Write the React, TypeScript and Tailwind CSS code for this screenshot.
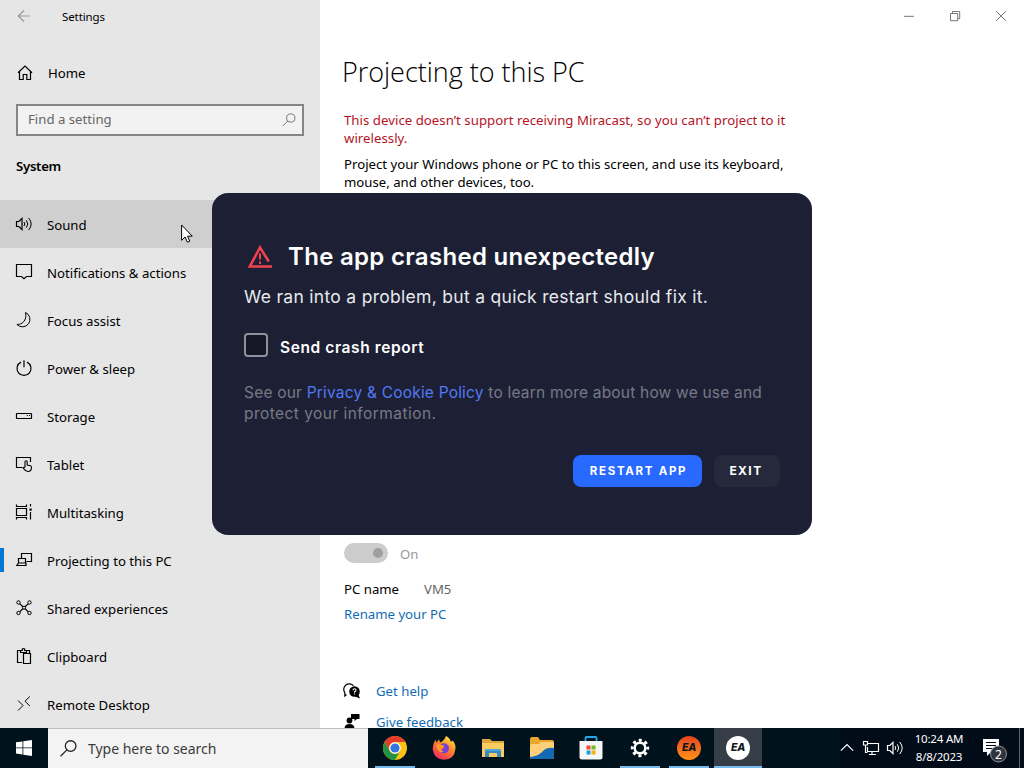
import React from 'react';

type NavEntry = { label: string; icon: React.ReactNode; hovered?: boolean; active?: boolean };

const Glyph: React.FC<{ children: React.ReactNode; className?: string }> = ({ children, className = 'w-4 h-4' }) => (
  <svg viewBox="0 0 16 16" fill="none" stroke="currentColor" strokeWidth="1" className={`shrink-0 overflow-visible ${className}`}>
    {children}
  </svg>
);

const SoundGlyph: React.FC<{ className?: string }> = ({ className }) => (
  <Glyph className={className}>
    <path d="M.5 5.500h2.300L6 2.500v11l-3.200-3H.5z" strokeWidth="1.200" />
    <path d="M8 6q1.600 2 0 4M10.300 4.300q3 3.700 0 7.400M12.700 2q5 6 0 12" />
  </Glyph>
);

const NAV: NavEntry[] = [
  { label: 'Sound', hovered: true, icon: <SoundGlyph /> },
  {
    label: 'Notifications & actions',
    icon: <Glyph><path d="M.5.500h15v12h-5L8 14.700l-2.500-2.200h-5z" strokeWidth="1.200" /></Glyph>,
  },
  {
    label: 'Focus assist',
    icon: <Glyph><path d="M9.500.5A7.500 7.500 0 1 1 .9 12.400C5.500 13 11.500 8.500 9.500.500z" /></Glyph>,
  },
  {
    label: 'Power & sleep',
    icon: <Glyph><path d="M8 .3v7M5 2.100A7 7 0 1 0 11 2.100" strokeWidth="1.200" /></Glyph>,
  },
  {
    label: 'Storage',
    icon: <Glyph><rect x=".5" y="5.500" width="15" height="5" rx=".6" strokeWidth="1.200" /><path d="M10.800 7.500h1M13 7.500h1" /></Glyph>,
  },
  {
    label: 'Tablet',
    icon: (
      <Glyph>
        <path d="M6.500 11.500h-6v-10h14v4.500" strokeWidth="1.200" />
        <path d="M9 11.500V5.800a1.100 1.100 0 0 1 2.200 0V9l3.300.8q1 .3 1 1.700c0 2.300-1.200 4-3.700 4-2.200 0-3-1.500-4.700-3.700.6-.9 1.200-.7 1.900-.3" strokeWidth="1.100" />
      </Glyph>
    ),
  },
  {
    label: 'Multitasking',
    icon: (
      <Glyph>
        <path d="M.5.500v2h10V.500M.5 4.500h10v7H.5zM.5 15.500v-2h10v2M14.500 0v2.500M14.500 8v7.500" strokeWidth="1.200" />
        <rect x="13.500" y="4.500" width="2.200" height="2.200" fill="currentColor" stroke="none" />
      </Glyph>
    ),
  },
  {
    label: 'Projecting to this PC',
    active: true,
    icon: <Glyph><path d="M5.500 6.500v-5h10v8h-5M2.500 6.500h7v4.500h-7zM2.500 11 .8 13.500h9.200V10.500" strokeWidth="1.200" /></Glyph>,
  },
  {
    label: 'Shared experiences',
    icon: (
      <Glyph>
        <circle cx="2.500" cy="2.500" r="1.700" />
        <circle cx="13.500" cy="2.500" r="1.700" />
        <circle cx="2.500" cy="13" r="1.700" />
        <circle cx="13.500" cy="13" r="1.700" />
        <circle cx="8" cy="7.700" r="1.500" />
        <path d="M3.700 3.600 6.900 6.700M12.300 3.600 9.100 6.700M3.700 11.900 6.900 8.800M12.300 11.900 9.100 8.800" strokeWidth="1.200" />
      </Glyph>
    ),
  },
  {
    label: 'Clipboard',
    icon: (
      <Glyph>
        <path d="M6 14.500H1.500v-12h3v2h6v-2h3v2.800M4.500 2.500h1.800V1q1.200-1 2.400 0v1.500h1.800M7.500 5.500h7v10h-7z" strokeWidth="1.200" />
      </Glyph>
    ),
  },
  {
    label: 'Remote Desktop',
    icon: <Glyph><path d="m2 4.500 5 5-5 5M13.800.500 9 5.200l4.800 4.800" /></Glyph>,
  },
];

const NavRow: React.FC<{ entry: NavEntry }> = ({ entry }) => (
  <button className={`flex h-12 w-full shrink-0 items-center text-left ${entry.hovered ? 'bg-[#cfcfcf]' : ''}`}>
    <span className={`h-6 w-1 ${entry.active ? 'bg-[#0078d7]' : ''}`} />
    <span className="ml-3 flex">{entry.icon}</span>
    <span className="ml-[15px] mt-1 whitespace-nowrap">{entry.label}</span>
  </button>
);

const Sidebar: React.FC = () => (
  <aside className="flex w-80 shrink-0 flex-col overflow-hidden bg-[#e6e6e6]">
    <div className="flex h-8 shrink-0 items-center pl-4 text-[11.5px]">
      <Glyph className="h-4 w-4 text-[#999]"><path d="M14 8H2.500M8 2.500 2.300 8 8 13.500" strokeWidth="1.200" /></Glyph>
      <span className="ml-[30px] mt-px tracking-[-0.1px]">Settings</span>
    </div>
    <div className="mt-[17px] flex h-12 shrink-0 items-center pl-[17px]">
      <Glyph><path d="M1 7.700 8 1l7 6.700M2.500 6.500v8h3.700V9.500h3.600v5h3.700v-8" strokeWidth="1.200" /></Glyph>
      <span className="ml-[15px] mt-0.5">Home</span>
    </div>
    <div className="mx-4 mt-[7px] flex h-8 shrink-0 items-center justify-between border-2 border-[#868686] bg-[#f2f2f2] pl-2.5 pr-1.5 text-[#666]">
      <span className="mb-px">Find a setting</span>
      <Glyph className="h-3.5 w-3.5"><circle cx="10" cy="5.700" r="4.700" /><path d="M6.700 9 1 14.800" /></Glyph>
    </div>
    <h2 className="mt-5 h-11 shrink-0 pl-4 font-semibold leading-5 tracking-[-0.3px]">System</h2>
    <nav className="flex flex-col">
      {NAV.map((entry) => <NavRow key={entry.label} entry={entry} />)}
    </nav>
  </aside>
);

const Content: React.FC = () => (
  <main className="flex min-w-0 flex-1 flex-col overflow-hidden bg-white">
    <div className="flex h-8 shrink-0 justify-end text-[#777]">
      <span className="flex w-[46px] items-center justify-center"><Glyph className="h-2.5 w-2.5"><path d="M0 8.500h16" strokeWidth="1.600" /></Glyph></span>
      <span className="flex w-[46px] items-center justify-center"><Glyph className="h-2.5 w-2.5"><path d="M.8 4h11.500v11.500H.8zM4 4V.8h11.500v11.500h-3.200" strokeWidth="1.600" /></Glyph></span>
      <span className="flex w-[46px] items-center justify-center"><Glyph className="h-2.5 w-2.5"><path d="m0 0 16 16M16 0 0 16" strokeWidth="1.600" /></Glyph></span>
    </div>
    <div className="flex flex-1 flex-col pl-6">
      <h1 className="-ml-0.5 mt-5 h-10 font-['Open_Sans',sans-serif] text-[27px] font-[330] leading-10 tracking-[-0.03px]">Projecting to this PC</h1>
      <p className="mt-[19px] w-[460px] leading-[18px] tracking-[0.04px] text-[#b5121f]">
        This device doesn’t support receiving Miracast, so you can’t project to it<br />wirelessly.
      </p>
      <p className="mt-2 w-[460px] leading-[18px]">
        Project your Windows phone or PC to this screen, and use its keyboard,<br />mouse, and other devices, too.
      </p>
      <div className="mt-[352px] flex h-5 items-center text-[#999]">
        <span className="flex h-5 w-11 items-center justify-end rounded-full bg-[#ccc] pr-[5px]">
          <span className="h-2.5 w-2.5 rounded-full bg-[#a0a0a0]" />
        </span>
        <span className="ml-3 mt-1">On</span>
      </div>
      <div className="mt-[17px] flex h-5 items-center">
        <span className="w-20">PC name</span>
        <span className="text-[#666]">VM5</span>
      </div>
      <a className="mt-1 h-5 leading-5 text-[#136cb3]">Rename your PC</a>
      <div className="mt-[57px] flex h-5 items-center">
        <Glyph>
          <path d="M2.500 11.500.8 13V9.500A5 5 0 1 1 9.500 3" strokeWidth="1.200" />
          <circle cx="10.500" cy="8.500" r="5.300" fill="currentColor" stroke="none" />
          <path d="M14 10.500 16 15.500l-5-2z" fill="currentColor" stroke="none" />
          <path d="M9 7.300q0-1.500 1.500-1.500t1.500 1.300-1.500 1.700v.9M10.500 10.600v1" stroke="white" strokeWidth="1.100" />
        </Glyph>
        <a className="ml-4 mt-0.5 text-[#136cb3]">Get help</a>
      </div>
      <div className="mt-[11px] flex h-5 shrink-0 items-center">
        <Glyph>
          <g fill="currentColor" stroke="none">
            <path d="M7 0h8.500v5H13l-2.500 2V5H7z" />
            <circle cx="5.500" cy="6.500" r="2.900" />
            <path d="M.5 15q0-5 5-5t5 5z" />
          </g>
        </Glyph>
        <a className="ml-4 mt-0.5 text-[#136cb3]">Give feedback</a>
      </div>
    </div>
  </main>
);

const CrashDialog: React.FC = () => (
  <section className="absolute left-[212px] top-[193px] flex h-[342px] w-[600px] flex-col rounded-[16px] bg-[#1d2034] px-8 pt-[49px] font-[Inter,sans-serif] text-white">
    <div className="flex h-[30px] items-center">
      <svg viewBox="0 0 26 24" fill="none" stroke="#ef414e" strokeWidth="2.600" className="ml-[3px] h-6 w-[26px]">
        <path d="M21.800 16.500 13 2.500 2.800 21.500H25" />
        <path d="M13 8.500v6M13 16.500v2.500" strokeWidth="2" />
      </svg>
      <h2 className="ml-[15px] whitespace-nowrap pb-px text-[24px] font-semibold tracking-[0.3px]">The app crashed unexpectedly</h2>
    </div>
    <p className="mt-[11px] h-7 whitespace-nowrap text-[17.5px] leading-7 tracking-[0.3px] text-[#e8e9ee]">We ran into a problem, but a quick restart should fix it.</p>
    <label className="mt-[22px] flex h-6 items-center">
      <span className="h-6 w-6 rounded-[4px] border-2 border-[#8e909c] bg-[#151727]" />
      <span className="ml-3 mt-[5px] whitespace-nowrap text-[15.5px] font-semibold tracking-[0.6px]">Send crash report</span>
    </label>
    <p className="mt-[25px] whitespace-nowrap text-[15.5px] leading-[21px] tracking-[0.2px] text-[#777987]">
      See our <a className="text-[#5179f4]">Privacy &amp; Cookie Policy</a> to learn more about how we use and<br /><span className="tracking-[0.45px]">protect your information.</span>
    </p>
    <div className="mt-[31px] flex justify-end gap-3 font-bold">
      <button className="h-8 w-[129px] whitespace-nowrap rounded-lg bg-[#2869ff] pl-0.5 pt-px text-[11.5px] tracking-[1.7px]">RESTART APP</button>
      <button className="h-8 w-[66px] rounded-lg bg-[#26293b] pr-0.5 text-[12px] tracking-[1.4px]">EXIT</button>
    </div>
  </section>
);

const Cursor: React.FC = () => (
  <svg viewBox="0 0 12 19" className="absolute left-[181px] top-[224px] h-[19px] w-3">
    <path d="M.6 1v15.300l3.500-3.300 2.300 5.200 2.400-1-2.300-5h4.800z" fill="white" stroke="black" />
  </svg>
);

const TaskIcon: React.FC<{ children: React.ReactNode; running?: boolean; focused?: boolean }> = ({ children, running, focused }) => (
  <div className={`flex h-10 w-12 shrink-0 flex-col items-center ${focused ? 'bg-[#363d47]' : ''}`}>
    <div className="flex h-[38px] items-center pt-0.5">{children}</div>
    <div className={`h-0.5 ${focused ? 'w-12' : 'w-10'} ${running ? 'bg-[#76b9ed]' : ''}`} />
  </div>
);

const Chrome: React.FC = () => (
  <svg viewBox="0 0 24 24" className="h-6 w-6">
    <circle cx="12" cy="12" r="12" fill="#fbc116" />
    <path d="M1.600 6A12 12 0 0 1 22.400 6H12a6 6 0 0 0-5.200 9z" fill="#e33b2e" />
    <path d="M1.600 6A12 12 0 0 0 12 24l5.200-9A6 6 0 0 1 6.800 15z" fill="#229342" />
    <circle cx="12" cy="12" r="5.800" fill="white" />
    <circle cx="12" cy="12" r="4.600" fill="#3574df" />
  </svg>
);

const Firefox: React.FC = () => (
  <svg viewBox="0 0 24 24" className="h-6 w-6">
    <defs>
      <linearGradient id="fox" x1=".8" y1="0" x2=".2" y2="1">
        <stop offset="0" stopColor="#fff04b" />
        <stop offset=".4" stopColor="#ff8b25" />
        <stop offset="1" stopColor="#ed2468" />
      </linearGradient>
    </defs>
    <path d="M14 0q4 2 4.700 5.500Q21 6 20.600 4.300 24 8.500 23.400 13 22.500 23.500 12 23.700 2 23.300.8 13.500.5 8 3.800 3.800l.7 3L7 3.300l1 3.200Q12.300 4.800 14 0z" fill="url(#fox)" />
    <path d="M8 8.500q5-3 8.500 1.200 1.800 5-2.500 7.300-5 1.500-6.800-3.200l3-.3 2-2.500z" fill="#7541d5" />
    <path d="M4 9q3-2 5.500 0l2.800.4q-.3 2-3 2.600-.7 3 2.700 3.700Q6 18 4 9z" fill="#ff9a23" />
  </svg>
);

const Explorer: React.FC = () => (
  <svg viewBox="0 0 22 20" className="h-5 w-[22px]">
    <path d="M0 1h8l2 2h12v16H0z" fill="#dfa43a" />
    <path d="M0 5h22v14H0z" fill="#f8cc60" />
    <path d="M3 11h16v8h-4v-4H7v4H3z" fill="#3a87c3" />
    <path d="M3 11h16v2H3z" fill="#4fa7dc" />
  </svg>
);

const FolderSwoosh: React.FC = () => (
  <svg viewBox="0 0 24 22" className="h-[22px] w-6">
    <path d="M0 2q0-2 2-2h6l2 3h12q2 0 2 2v6H0z" fill="#e9a72e" />
    <path d="M0 9q0-2 2-2h7l2-2h11q2 0 2 2v13q0 2-2 2H2q-2 0-2-2z" fill="#ffd07a" />
    <path d="M0 20q9-1 13-6 4-4 11-3v9q0 2-2 2H2q-2 0-2-2z" fill="#1469b5" />
  </svg>
);

const Store: React.FC = () => (
  <svg viewBox="0 0 24 24" className="h-6 w-6">
    <path d="M6.500 6V2q0-1 1-1h9q1 0 1 1v4" fill="none" stroke="#24a8e8" strokeWidth="1.800" />
    <path d="M.5 5h23v16q0 2.500-2.500 2.500H3Q.5 23.500.5 21z" fill="#f5f6f8" />
    <path d="M7.500 9.500h4v4h-4z" fill="#e94f2d" />
    <path d="M12.500 9.500h4v4h-4z" fill="#78b71a" />
    <path d="M7.500 14.500h4v4h-4z" fill="#1b9fe2" />
    <path d="M12.500 14.500h4v4h-4z" fill="#f5b211" />
  </svg>
);

const Gear: React.FC = () => (
  <svg viewBox="-10 -10 20 20" className="h-5 w-5" fill="none" stroke="white">
    <circle r="5.300" strokeWidth="2.500" />
    <circle r="7.700" strokeWidth="3" strokeDasharray="3.024 3.024" strokeDashoffset="1.512" />
  </svg>
);

const EaBadge: React.FC<{ orange?: boolean }> = ({ orange }) => (
  <span className={`flex h-6 w-6 items-center justify-center rounded-full font-[Inter,sans-serif] text-[10.5px] font-extrabold italic tracking-[-0.4px] text-[#10151a] ${orange ? 'bg-linear-to-b from-[#e6401f] to-[#ff9116]' : 'bg-white'}`}>
    EA
  </span>
);

const Taskbar: React.FC = () => (
  <footer className="flex h-10 w-full shrink-0 bg-[#00131d] text-white">
    <button className="flex w-12 items-center justify-center">
      <svg viewBox="0 0 16 16" className="h-4 w-4" fill="white">
        <path d="M0 2.300 6.500 1.400v6.100H0zM7.300 1.300 16 0v7.500H7.300zM0 8.300h6.500v6.200L0 13.600zM7.300 8.300H16V16l-8.700-1.300z" />
      </svg>
    </button>
    <div className="flex w-80 items-center border-t border-[#bdbdbd] bg-[#f3f3f3] pl-3 text-[14px] text-[#3b3b3b]">
      <Glyph className="h-[17px] w-[17px] text-[#222]"><circle cx="10" cy="5.700" r="5" strokeWidth="1.200" /><path d="M6.500 9.300.5 15.300" strokeWidth="1.200" /></Glyph>
      <span className="ml-[11px] tracking-[-0.03px]">Type here to search</span>
    </div>
    <div className="ml-[3px] flex gap-px">
      <TaskIcon running><Chrome /></TaskIcon>
      <TaskIcon><Firefox /></TaskIcon>
      <TaskIcon><Explorer /></TaskIcon>
      <TaskIcon><FolderSwoosh /></TaskIcon>
      <TaskIcon><Store /></TaskIcon>
      <TaskIcon running><Gear /></TaskIcon>
      <TaskIcon running><EaBadge orange /></TaskIcon>
      <TaskIcon running focused><EaBadge /></TaskIcon>
    </div>
    <div className="ml-auto flex items-center bg-[#020b18]">
      <Glyph className="h-3.5 w-3.5"><path d="m1 11 7-7 7 7" strokeWidth="1.400" /></Glyph>
      <Glyph className="ml-[9px] h-4 w-4"><path d="M4.500 3.500h11v8h-11V7M9 11.500v3M6 14.500h7M.5 1.500h4v3.500h-4zM2.500 5v7.500h2" strokeWidth="1.200" /></Glyph>
      <SoundGlyph className="ml-2 h-4 w-4" />
      <div className="ml-[11px] mb-px w-[50px] whitespace-nowrap text-center text-[11.5px] leading-[18px] tracking-[-0.2px]">
        <div>10:24 AM</div>
        <div>8/8/2023</div>
      </div>
      <svg viewBox="0 0 26 28" className="ml-[18px] mr-[11px] mt-1 h-7 w-[26px]">
        <path d="M1 3h16v13H9l-4 4v-4H1z" fill="white" />
        <path d="M4 6.500h10M4 9.500h10M4 12.500h6" stroke="#020b18" />
        <circle cx="16.500" cy="18" r="8" fill="#30353d" stroke="#8c9096" />
        <text x="16.500" y="22.500" fill="white" fontSize="12" textAnchor="middle">2</text>
      </svg>
      <span className="mr-1 h-full w-px bg-[#59616b]" />
    </div>
  </footer>
);

const App: React.FC = () => (
  <div className="relative flex h-screen w-screen flex-col overflow-hidden font-['Noto_Sans','Open_Sans',sans-serif] text-[13.2px] text-black">
    <div className="flex min-h-0 flex-1">
      <Sidebar />
      <Content />
    </div>
    <Taskbar />
    <CrashDialog />
    <Cursor />
  </div>
);

export default App;
